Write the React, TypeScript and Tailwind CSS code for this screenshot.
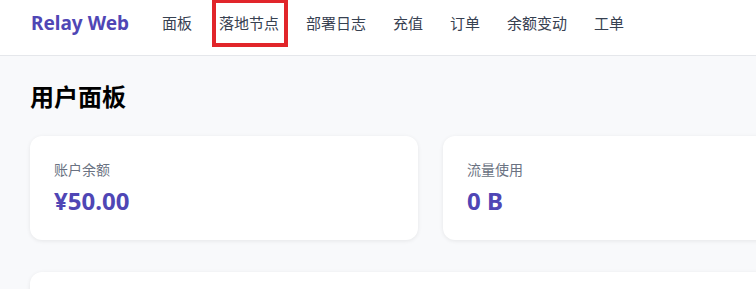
import React from "react";

const nav = ["面板", "落地节点", "部署日志", "充值", "订单", "余额变动", "工单"];

const stats = [
  { label: "账户余额", value: "¥50.00" },
  { label: "流量使用", value: "0 B" },
];

export default function App() {
  return (
    <div
      className="w-screen h-screen overflow-hidden bg-[#f8f9fb] text-gray-900"
      style={{ fontFamily: '"Noto Sans", "Noto Sans CJK SC", sans-serif' }}
    >
      <header className="h-14 bg-white border-b border-gray-200 flex items-center pb-[9px] px-[31px] w-[1280px]">
        <div className="text-[19px] font-bold text-[#4f46b5] mr-[33px]">Relay Web</div>
        <nav className="flex items-center gap-[27px] text-[15px] text-[#374151]">
          {nav.map((n, i) => (
            <span key={n} className="relative leading-[20px]">
              {n}
              {i === 1 && (
                <span className="absolute left-[-7px] right-[-9px] top-[-14px] bottom-[-14px] border-4 border-[#e1252a]" />
              )}
            </span>
          ))}
        </nav>
      </header>
      <main className="px-[30px] pt-[25px] w-[1280px]">
        <h1 className="text-[24px] leading-[32px] font-bold text-black mb-[23px]">用户面板</h1>
        <div className="grid grid-cols-[388px_388px_388px] gap-x-[25px] gap-y-[32px]">
          {stats.map((s) => (
            <div key={s.label} className="bg-white rounded-xl shadow-[0_1px_4px_rgba(0,0,0,0.08)] px-6 pt-6 pb-6 h-[104px]">
              <div className="text-[14px] leading-[20px] text-gray-500">{s.label}</div>
              <div className="mt-[6px] text-[24px] leading-[30px] font-bold text-[#4f46b5]">{s.value}</div>
            </div>
          ))}
          <div className="bg-white rounded-xl shadow-[0_1px_4px_rgba(0,0,0,0.08)] h-[104px]" />
          <div className="bg-white rounded-xl shadow-[0_1px_4px_rgba(0,0,0,0.08)] h-[104px] col-span-3" />
        </div>
      </main>
    </div>
  );
}
